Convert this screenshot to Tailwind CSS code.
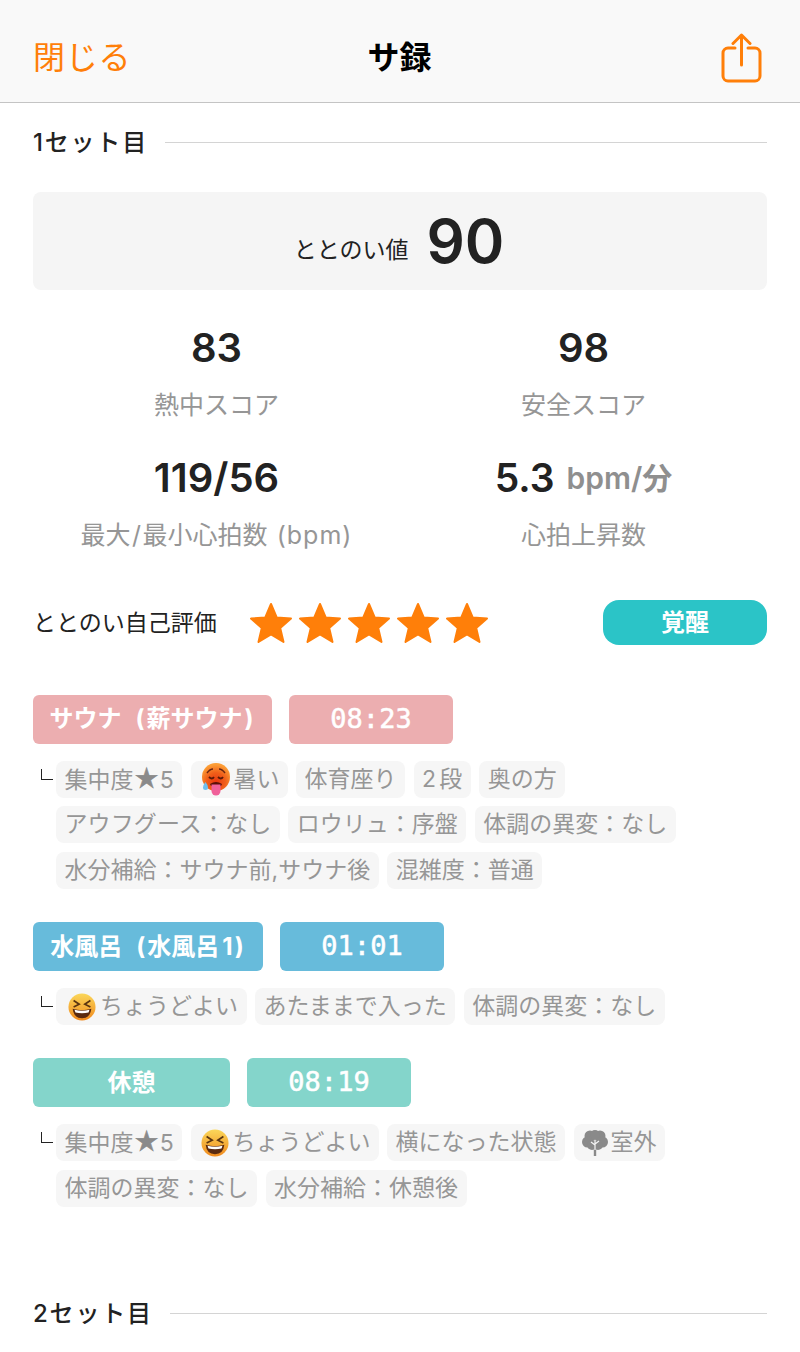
<!DOCTYPE html>
<html lang="ja">
<head>
<meta charset="utf-8">
<script src="https://cdn.jsdelivr.net/npm/@tailwindcss/browser@4"></script>
</head>
<body class="bg-white font-['Inter','Noto_Sans_CJK_JP',sans-serif] text-[#222] overflow-hidden">
<div class="w-[800px] h-[1352px] overflow-hidden">
  <header class="h-[103px] bg-[#f9f9f9] border-b border-[#c4c4c4] flex items-center justify-between pl-[33px] pr-[38px] pt-[7px]">
    <span class="w-[120px] text-[32px] leading-[40px] tracking-[0.7px] text-[#ff7f09] font-['Noto_Sans_CJK_JP',sans-serif]">閉じる</span>
    <span class="text-[32px] leading-[40px] font-bold text-black font-['Noto_Sans_CJK_JP',sans-serif] ml-[4px]">サ録</span>
    <span class="w-[120px] flex justify-end mt-[7px]">
      <svg width="41" height="50" viewBox="0 0 41 50" fill="none" stroke="#ff7f09" stroke-width="3" stroke-linecap="round" stroke-linejoin="round"><path d="M14 15H7a5 5 0 0 0-5 5v23a5 5 0 0 0 5 5h27a5 5 0 0 0 5-5V20a5 5 0 0 0-5-5h-7"/><path d="M20.500 32V2M12 10.500 20.500 2 29 10.500"/></svg>
    </span>
  </header>

  <main class="px-[33px]">
    <div class="flex items-center gap-[17px] h-[79px] pb-[1px]">
      <span class="text-[24px] font-medium leading-[30px] tracking-[1.8px] mt-[2px]">1セット目</span>
      <span class="flex-1 h-px bg-[#d4d4d4]"></span>
    </div>

    <div class="mt-[10px] h-[98px] rounded-lg bg-[#f5f5f5] flex items-center justify-center gap-[18px] pr-[2px]">
      <span class="text-[23px] leading-[30px] mt-[18px]">ととのい値</span>
      <span class="text-[60px] leading-[70px] font-semibold">90</span>
    </div>

    <div class="grid grid-cols-2 mt-[33px] text-center">
      <div class="h-[130px]">
        <div class="text-[40px] leading-[50px] font-semibold">83</div>
        <div class="text-[25px] leading-[32px] mt-[16px] text-[#969696]">熱中スコア</div>
      </div>
      <div class="h-[130px]">
        <div class="text-[40px] leading-[50px] font-semibold">98</div>
        <div class="text-[25px] leading-[32px] mt-[16px] text-[#969696]">安全スコア</div>
      </div>
      <div>
        <div class="text-[40px] leading-[50px] font-semibold">119/56</div>
        <div class="text-[25px] leading-[32px] mt-[16px] text-[#969696]">最大<span class="px-[1.5px]">/</span>最小心拍数 <span class="ml-[2px] tracking-[1px]">(bpm)</span></div>
      </div>
      <div>
        <div class="flex items-center justify-center gap-[12px] h-[50px] leading-[50px]">
          <span class="text-[39px] font-semibold">5.3</span>
          <span class="text-[30px] font-semibold text-[#8f8f8f]">bpm/分</span>
        </div>
        <div class="text-[25px] leading-[32px] mt-[16px] text-[#969696]">心拍上昇数</div>
      </div>
    </div>

    <div class="flex items-center mt-[49px] h-[45px]">
      <span class="w-[217px] text-[23px] leading-[30px]">ととのい自己評価</span>
      <div class="flex gap-[7px]">
        <svg width="42" height="41" viewBox="0 0 42 41"><path fill="#ff7f09" stroke="#ff7f09" stroke-width="2" stroke-linejoin="round" d="M21 2l5.700 13.400 14.300 1.200-10.800 9.400 3.300 14-12.500-7.500-12.500 7.500 3.300-14L1 16.600l14.300-1.200z"/></svg>
        <svg width="42" height="41" viewBox="0 0 42 41"><path fill="#ff7f09" stroke="#ff7f09" stroke-width="2" stroke-linejoin="round" d="M21 2l5.700 13.400 14.300 1.200-10.800 9.400 3.300 14-12.500-7.500-12.500 7.500 3.300-14L1 16.600l14.300-1.200z"/></svg>
        <svg width="42" height="41" viewBox="0 0 42 41"><path fill="#ff7f09" stroke="#ff7f09" stroke-width="2" stroke-linejoin="round" d="M21 2l5.700 13.400 14.300 1.200-10.800 9.400 3.300 14-12.500-7.500-12.500 7.500 3.300-14L1 16.600l14.300-1.200z"/></svg>
        <svg width="42" height="41" viewBox="0 0 42 41"><path fill="#ff7f09" stroke="#ff7f09" stroke-width="2" stroke-linejoin="round" d="M21 2l5.700 13.400 14.300 1.200-10.800 9.400 3.300 14-12.500-7.500-12.500 7.500 3.300-14L1 16.600l14.300-1.200z"/></svg>
        <svg width="42" height="41" viewBox="0 0 42 41"><path fill="#ff7f09" stroke="#ff7f09" stroke-width="2" stroke-linejoin="round" d="M21 2l5.700 13.400 14.300 1.200-10.800 9.400 3.300 14-12.500-7.500-12.500 7.500 3.300-14L1 16.600l14.300-1.200z"/></svg>
      </div>
      <span class="ml-auto w-[164px] h-[45px] rounded-[16px] bg-[#2bc4c7] text-white font-bold text-[24px] flex items-center justify-center">覚醒</span>
    </div>

    <!-- Sauna -->
    <div class="flex gap-[17px] mt-[49.5px]">
      <span class="w-[239px] h-[49px] rounded-md bg-[#ecaeb0] text-white font-bold text-[24px] flex items-center justify-center">サウナ&ensp;<span class="px-[2px]">(</span>薪サウナ<span class="px-[2px]">)</span></span>
      <span class="w-[164px] h-[49px] rounded-md bg-[#ecaeb0] text-white text-[27px] [-webkit-text-stroke:0.5px_white] font-['DejaVu_Sans_Mono',monospace] flex items-center justify-center">08:23</span>
    </div>
    <div class="flex mt-[17px]">
      <span class="w-[23px] shrink-0 pt-[8px] pl-[8px]"><span class="block w-[12px] h-[11px] border-l-[1.5px] border-b-[1.5px] border-[#222]"></span></span>
      <div class="flex flex-wrap gap-x-[8.5px] gap-y-[8.5px] text-[23px] leading-[37px] text-[#969696]">
        <span class="h-[37px] rounded-lg bg-[#f6f6f6] px-[8.5px]">集中度<span class="text-[25px] text-[#8a8a8a] [-webkit-text-stroke:0.5px_#8a8a8a]">★</span>5</span>
        <span class="h-[37px] rounded-lg bg-[#f6f6f6] pl-[10px] pr-[8px] flex items-center">
          <svg class="mr-[3px]" width="30" height="34" viewBox="0 0 30 34"><defs><radialGradient id="h1" cx="50%" cy="68%" r="62%"><stop offset="0" stop-color="#e8350f"/><stop offset="0.55" stop-color="#f0601a"/><stop offset="1" stop-color="#fc9d35"/></radialGradient></defs><circle cx="15" cy="15" r="14" fill="url(#h1)"/><path d="M6 11q3-4 6-4M24 11q-3-4-6-4" stroke="#6a2410" stroke-width="1.500" fill="none"/><path d="M8 15q3 3 5 0M17 15q3 3 5 0" stroke="#5a1a08" stroke-width="1.800" fill="none"/><path d="M9 22q6-4 12 0l-1 2H10z" fill="#5a1008"/><path d="M10.500 22.500h9v6.500a4.500 4.500 0 0 1-9 0z" fill="#f0609a"/><path d="M4.500 20q2.500 3 2.500 5.500a2.500 2.500 0 0 1-5 0q0-2.500 2.500-5.500z" fill="#6fc0ee"/></svg>暑い</span>
        <span class="h-[37px] rounded-lg bg-[#f6f6f6] px-[8.5px]">体育座り</span>
        <span class="h-[37px] rounded-lg bg-[#f6f6f6] px-[8.5px]"><span class="mr-[3px]">2</span>段</span>
        <span class="h-[37px] rounded-lg bg-[#f6f6f6] px-[8.5px]">奥の方</span>
        <span class="h-[37px] rounded-lg bg-[#f6f6f6] px-[8.5px] tracking-[0.1px]">アウフグース：なし</span>
        <span class="h-[37px] rounded-lg bg-[#f6f6f6] px-[8.5px]">ロウリュ：序盤</span>
        <span class="h-[37px] rounded-lg bg-[#f6f6f6] px-[8.5px]">体調の異変：なし</span>
        <span class="h-[37px] rounded-lg bg-[#f6f6f6] px-[8.5px]">水分補給：サウナ前,サウナ後</span>
        <span class="h-[37px] rounded-lg bg-[#f6f6f6] px-[8.5px]">混雑度：普通</span>
      </div>
    </div>

    <!-- Water -->
    <div class="flex gap-[17px] mt-[33.5px]">
      <span class="w-[230px] h-[49px] rounded-md bg-[#67bbdb] text-white font-bold text-[24px] flex items-center justify-center">水風呂&ensp;<span class="px-[2px]">(</span>水風呂<span class="ml-[3px]">1</span><span class="px-[2px]">)</span></span>
      <span class="w-[164px] h-[49px] rounded-md bg-[#67bbdb] text-white text-[27px] [-webkit-text-stroke:0.5px_white] font-['DejaVu_Sans_Mono',monospace] flex items-center justify-center">01:01</span>
    </div>
    <div class="flex mt-[17px]">
      <span class="w-[23px] shrink-0 pt-[8px] pl-[8px]"><span class="block w-[12px] h-[11px] border-l-[1.5px] border-b-[1.5px] border-[#222]"></span></span>
      <div class="flex flex-wrap gap-x-[8.5px] gap-y-[9px] text-[23px] leading-[37px] text-[#969696]">
        <span class="h-[37px] rounded-lg bg-[#f6f6f6] pl-[12px] pr-[8.5px] flex items-center">
          <svg class="mr-[4px]" width="28" height="28" viewBox="0 0 30 30"><defs><linearGradient id="g1" x1="0" y1="0" x2="0" y2="1"><stop offset="0" stop-color="#fbd75a"/><stop offset="1" stop-color="#f08a1d"/></linearGradient></defs><circle cx="15" cy="15" r="14.500" fill="url(#g1)"/><path d="M6 8l6 4-6 3M24 8l-6 4 6 3" stroke="#5a3410" stroke-width="1.800" fill="none"/><path d="M5 17q10 3 20 0q-1 10-10 10T5 17z" fill="#5a2a10"/><path d="M7 18q8 2 16 0l-1 3q-7 1.500-14 0z" fill="#fff"/></svg>ちょうどよい</span>
        <span class="h-[37px] rounded-lg bg-[#f6f6f6] px-[8.5px]">あたままで入った</span>
        <span class="h-[37px] rounded-lg bg-[#f6f6f6] px-[8.5px]">体調の異変：なし</span>
      </div>
    </div>

    <!-- Rest -->
    <div class="flex gap-[17px] mt-[33px]">
      <span class="w-[197px] h-[49px] rounded-md bg-[#84d5cb] text-white font-bold text-[24px] flex items-center justify-center">休憩</span>
      <span class="w-[164px] h-[49px] rounded-md bg-[#84d5cb] text-white text-[27px] [-webkit-text-stroke:0.5px_white] font-['DejaVu_Sans_Mono',monospace] flex items-center justify-center">08:19</span>
    </div>
    <div class="flex mt-[17px]">
      <span class="w-[23px] shrink-0 pt-[8px] pl-[8px]"><span class="block w-[12px] h-[11px] border-l-[1.5px] border-b-[1.5px] border-[#222]"></span></span>
      <div class="flex flex-wrap gap-x-[8.5px] gap-y-[9px] text-[23px] leading-[37px] text-[#969696]">
        <span class="h-[37px] rounded-lg bg-[#f6f6f6] px-[8.5px]">集中度<span class="text-[25px] text-[#8a8a8a] [-webkit-text-stroke:0.5px_#8a8a8a]">★</span>5</span>
        <span class="h-[37px] rounded-lg bg-[#f6f6f6] pl-[10px] pr-[8px] flex items-center">
          <svg class="mr-[4px]" width="28" height="28" viewBox="0 0 30 30"><defs><linearGradient id="g2" x1="0" y1="0" x2="0" y2="1"><stop offset="0" stop-color="#fbd75a"/><stop offset="1" stop-color="#f08a1d"/></linearGradient></defs><circle cx="15" cy="15" r="14.500" fill="url(#g2)"/><path d="M6 8l6 4-6 3M24 8l-6 4 6 3" stroke="#5a3410" stroke-width="1.800" fill="none"/><path d="M5 17q10 3 20 0q-1 10-10 10T5 17z" fill="#5a2a10"/><path d="M7 18q8 2 16 0l-1 3q-7 1.500-14 0z" fill="#fff"/></svg>ちょうどよい</span>
        <span class="h-[37px] rounded-lg bg-[#f6f6f6] px-[8.5px]">横になった状態</span>
        <span class="h-[37px] rounded-lg bg-[#f6f6f6] pl-[8px] pr-[8.5px] flex items-center">
          <svg class="mr-[3px]" width="26" height="26" viewBox="0 0 26 26"><g fill="#8a8a8a"><circle cx="8" cy="6" r="5.500"/><circle cx="18" cy="6" r="5.500"/><circle cx="13" cy="5" r="5"/><circle cx="5.500" cy="12" r="5.500"/><circle cx="20.500" cy="12" r="5.500"/><circle cx="10" cy="15" r="5"/><circle cx="16" cy="15" r="5"/><path d="M11.800 13h2.400v13h-2.400z"/></g><path d="M13 20v-9M13 15l-4-3M13 14l4-3" stroke="#f6f6f6" stroke-width="1.200" fill="none"/></svg>室外</span>
        <span class="h-[37px] rounded-lg bg-[#f6f6f6] px-[8.5px]">体調の異変：なし</span>
        <span class="h-[37px] rounded-lg bg-[#f6f6f6] px-[8.5px]">水分補給：休憩後</span>
      </div>
    </div>

    <div class="flex items-center gap-[17px] mt-[91px] h-[30px]">
      <span class="text-[24px] font-medium leading-[30px] tracking-[1.8px] mt-[2px]">2セット目</span>
      <span class="flex-1 h-px bg-[#d4d4d4]"></span>
    </div>
  </main>
</div>
</body>
</html>
